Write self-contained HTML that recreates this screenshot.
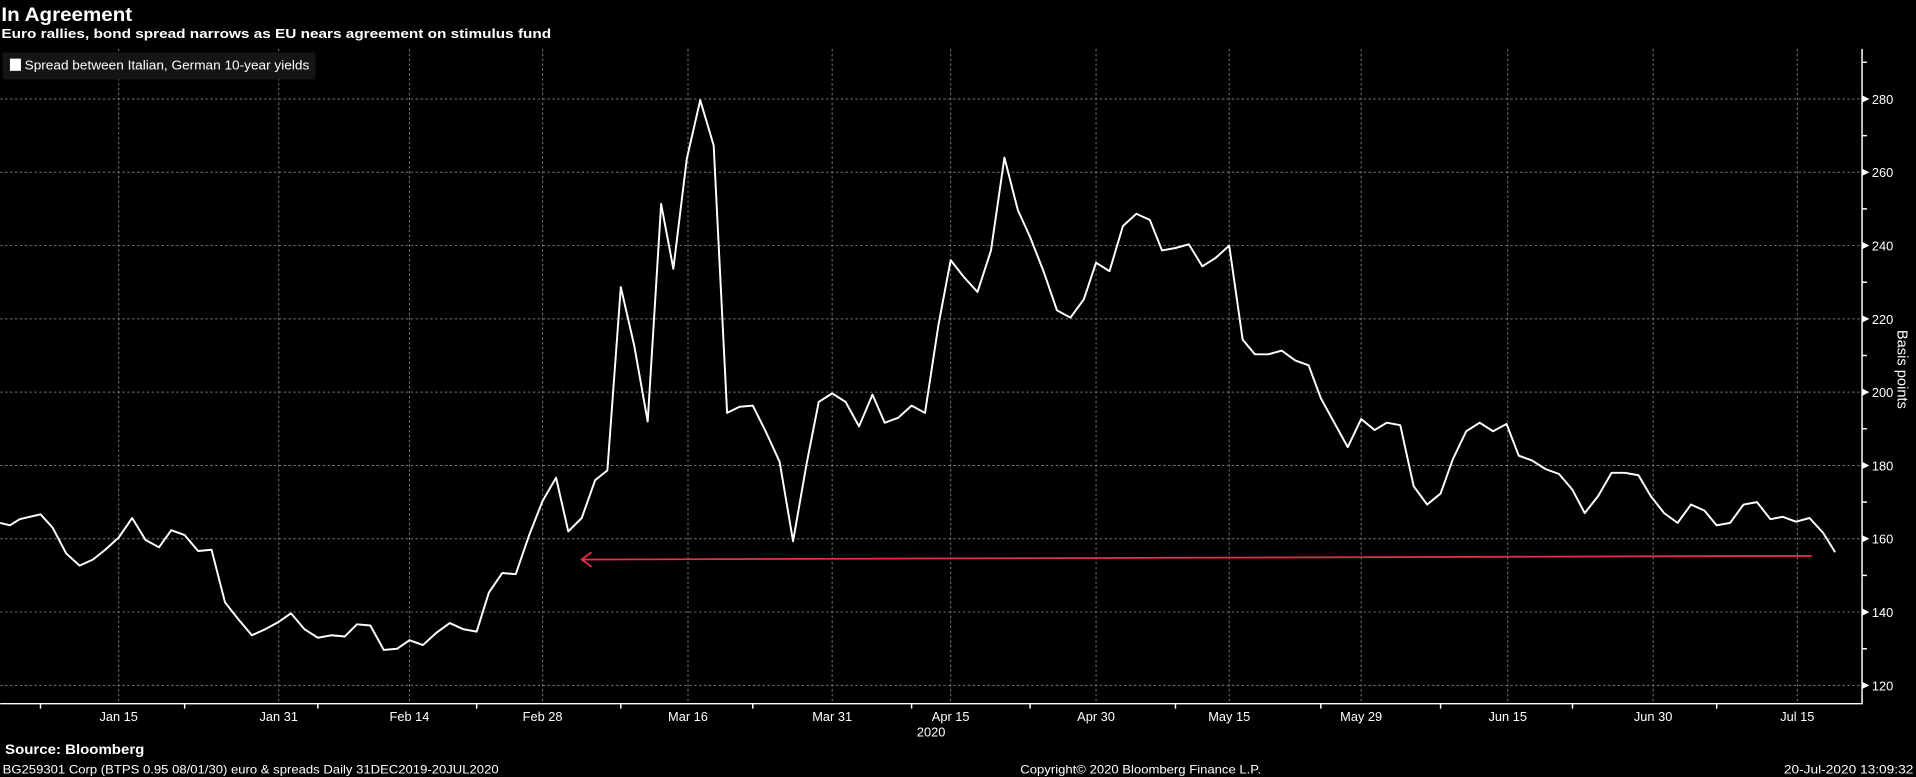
<!DOCTYPE html>
<html><head><meta charset="utf-8"><style>
html,body{margin:0;padding:0;background:#000;overflow:hidden}
svg{display:block}
text{font-family:"Liberation Sans","DejaVu Sans",sans-serif;fill:#fff}
</style></head><body>
<svg width="1916" height="777" viewBox="0 0 1568 636" xmlns="http://www.w3.org/2000/svg">
<rect width="1568" height="636" fill="#000"/>
<text x="1" y="17" font-size="15.5" font-weight="bold" textLength="107" lengthAdjust="spacingAndGlyphs">In Agreement</text>
<text x="1" y="31" font-size="10.5" font-weight="bold" textLength="450" lengthAdjust="spacingAndGlyphs">Euro rallies, bond spread narrows as EU nears agreement on stimulus fund</text>
<g stroke="#777" stroke-width="0.8" stroke-dasharray="2,2">
<line x1="0" y1="81" x2="1522" y2="81"/><line x1="0" y1="141" x2="1522" y2="141"/>
<line x1="0" y1="201" x2="1522" y2="201"/><line x1="0" y1="261" x2="1522" y2="261"/>
<line x1="0" y1="321" x2="1522" y2="321"/><line x1="0" y1="381" x2="1522" y2="381"/>
<line x1="0" y1="441" x2="1522" y2="441"/><line x1="0" y1="501" x2="1522" y2="501"/>
<line x1="0" y1="561" x2="1522" y2="561"/>
<line x1="97" y1="40" x2="97" y2="576"/><line x1="228" y1="40" x2="228" y2="576"/>
<line x1="335" y1="40" x2="335" y2="576"/><line x1="444" y1="40" x2="444" y2="576"/>
<line x1="563" y1="40" x2="563" y2="576"/><line x1="681" y1="40" x2="681" y2="576"/>
<line x1="778" y1="40" x2="778" y2="576"/><line x1="897" y1="40" x2="897" y2="576"/>
<line x1="1006" y1="40" x2="1006" y2="576"/><line x1="1114" y1="40" x2="1114" y2="576"/>
<line x1="1234" y1="40" x2="1234" y2="576"/><line x1="1353" y1="40" x2="1353" y2="576"/>
<line x1="1471" y1="40" x2="1471" y2="576"/>
</g>
<rect x="2" y="43" width="256" height="22" fill="#151515"/>
<rect x="8" y="48" width="9" height="10" fill="#fff"/>
<text x="20" y="57" font-size="10.5" textLength="233" lengthAdjust="spacingAndGlyphs">Spread between Italian, German 10-year yields</text>
<g stroke="#fff" stroke-width="1.2" fill="none">
<polyline points="0,576 1524,576 1524,40"/>
<path d="M1524,51h4M1524,111h4M1524,171h4M1524,231h4M1524,291h4M1524,351h4M1524,411h4M1524,471h4M1524,531h4"/>
<path d="M33,576v4M151,576v4M260,576v4M390,576v4M508,576v4M616,576v4M746,576v4M843,576v4M962,576v4M1081,576v4M1179,576v4M1287,576v4M1405,576v4"/>
</g>
<g fill="#fff">
<path d="M1524,78l6,3l-6,3z"/><path d="M1524,138l6,3l-6,3z"/><path d="M1524,198l6,3l-6,3z"/>
<path d="M1524,258l6,3l-6,3z"/><path d="M1524,318l6,3l-6,3z"/><path d="M1524,378l6,3l-6,3z"/>
<path d="M1524,438l6,3l-6,3z"/><path d="M1524,498l6,3l-6,3z"/><path d="M1524,558l6,3l-6,3z"/>
</g>
<g font-size="10.5">
<text x="1532" y="85">280</text><text x="1532" y="145">260</text><text x="1532" y="205">240</text>
<text x="1532" y="265">220</text><text x="1532" y="325">200</text><text x="1532" y="385">180</text>
<text x="1532" y="445">160</text><text x="1532" y="505">140</text><text x="1532" y="565">120</text>
</g>
<text transform="translate(1553,270) rotate(90)" font-size="12">Basis points</text>
<g font-size="10.5" text-anchor="middle">
<text x="97" y="590">Jan 15</text><text x="228" y="590">Jan 31</text><text x="335" y="590">Feb 14</text>
<text x="444" y="590">Feb 28</text><text x="563" y="590">Mar 16</text><text x="681" y="590">Mar 31</text>
<text x="778" y="590">Apr 15</text><text x="897" y="590">Apr 30</text><text x="1006" y="590">May 15</text>
<text x="1114" y="590">May 29</text><text x="1234" y="590">Jun 15</text><text x="1353" y="590">Jun 30</text>
<text x="1471" y="590">Jul 15</text><text x="762" y="603">2020</text>
</g>
<polyline fill="none" stroke="#fff" stroke-width="1.6" stroke-linejoin="round" points="0,428 8,430 16,425 33,421 43,432 54,453 65,463 76,458 86,450 97,440 108,424 119,442 130,448 140,434 151,438 162,451 173,450 184,493 195,507 206,520 217,515 228,509 238,502 249,515 260,522 271,520 282,521 292,511 303,512 314,532 325,531 335,524 346,528 357,518 368,510 379,515 390,517 400,485 411,469 422,470 433,438 444,410 455,391 465,435 476,424 487,393 497,385 508,235 519,283 530,345 541,167 551,220 562,130 573,82 584,119 595,338 605,333 616,332 627,354 638,378 649,443 660,380 670,329 681,322 692,329 703,349 714,323 724,346 735,342 746,332 757,338 768,266 778,213 789,227 800,239 811,205 822,129 833,172 843,194 854,222 865,254 876,260 887,245 897,215 908,222 919,185 930,175 941,180 951,205 962,203 973,200 984,218 995,211 1006,201 1017,278 1027,290 1038,290 1049,287 1060,295 1071,299 1081,326 1092,346 1103,366 1114,343 1125,352 1135,346 1146,348 1157,398 1168,413 1179,404 1189,376 1200,353 1211,346 1222,353 1233,347 1243,373 1254,377 1265,384 1276,388 1287,401 1297,420 1308,406 1319,387 1330,387 1341,389 1351,406 1362,420 1373,428 1384,413 1395,418 1405,430 1416,428 1427,413 1438,411 1449,425 1459,423 1470,427 1481,424 1492,436 1502,452"/>
<g stroke="#e0314b" stroke-width="1.5" fill="none">
<line x1="476" y1="458" x2="1483" y2="455"/>
<polyline points="484,452 476,458 484,464"/>
</g>
<text x="4" y="617" font-size="11" font-weight="bold" textLength="114" lengthAdjust="spacingAndGlyphs">Source: Bloomberg</text>
<g font-size="9.5">
<text x="2" y="633" textLength="406" lengthAdjust="spacingAndGlyphs">BG259301 Corp (BTPS 0.95 08/01/30) euro &amp; spreads  Daily 31DEC2019-20JUL2020</text>
<text x="835" y="633" textLength="197" lengthAdjust="spacingAndGlyphs">Copyright© 2020 Bloomberg Finance L.P.</text>
<text x="1460" y="633" textLength="106" lengthAdjust="spacingAndGlyphs">20-Jul-2020 13:09:32</text>
</g>
</svg>
</body></html>
